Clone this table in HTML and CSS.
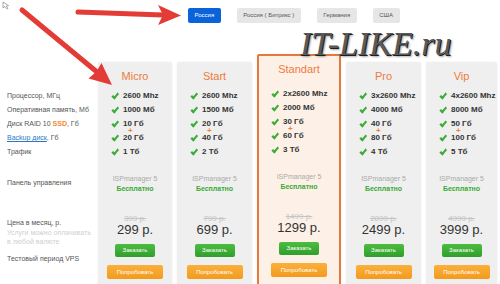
FILE: index.html
```html
<!DOCTYPE html>
<html lang="ru">
<head>
<meta charset="utf-8">
<title>VPS тарифы</title>
<link rel="stylesheet" href="styles.css">
</head>
<body>
<div class="page">
  <div class="tabs">
    <span class="tab active">Россия</span>
    <span class="tab">Россия ( Битрикс )</span>
    <span class="tab">Германия</span>
    <span class="tab">США</span>
  </div>

  <div class="table">
    <div class="labels">
      <div class="lbl">Процессор, МГц</div>
      <div class="lbl">Оперативная память, Мб</div>
      <div class="lbl">Диск RAID 10 <b class="ssd">SSD</b>, Гб</div>
      <div class="lbl"><a class="backup">Backup диск</a>, Гб</div>
      <div class="lbl">Трафик</div>
      <div class="lbl-panel">Панель управления</div>
      <div class="lbl-price">Цена в месяц, р.</div>
      <div class="lbl-note">Услуги можно оплачивать<br>в любой валюте</div>
      <div class="lbl-test">Тестовый период VPS</div>
    </div>

    <div class="card">
      <div class="title">Micro</div>
      <ul class="feats">
        <li class="feat"><i class="chk"></i>2600 Mhz</li>
        <li class="feat"><i class="chk"></i>1000 Мб</li>
        <li class="feat disk"><i class="chk"></i>10 Гб<span class="plus">+</span></li>
        <li class="feat"><i class="chk"></i>20 Гб</li>
        <li class="feat"><i class="chk"></i>1 Тб</li>
      </ul>
      <div class="isp">ISPmanager 5<br><span class="free">Бесплатно</span></div>
      <div class="old">399 р.</div>
      <div class="price">299 р.</div>
      <div class="btn order">Заказать</div>
      <div class="btn try">Попробовать</div>
    </div>

    <div class="card">
      <div class="title">Start</div>
      <ul class="feats">
        <li class="feat"><i class="chk"></i>2600 Mhz</li>
        <li class="feat"><i class="chk"></i>1500 Мб</li>
        <li class="feat disk"><i class="chk"></i>20 Гб<span class="plus">+</span></li>
        <li class="feat"><i class="chk"></i>40 Гб</li>
        <li class="feat"><i class="chk"></i>2 Тб</li>
      </ul>
      <div class="isp">ISPmanager 5<br><span class="free">Бесплатно</span></div>
      <div class="old">799 р.</div>
      <div class="price">699 р.</div>
      <div class="btn order">Заказать</div>
      <div class="btn try">Попробовать</div>
    </div>

    <div class="card featured">
      <div class="title">Standart</div>
      <ul class="feats">
        <li class="feat"><i class="chk"></i>2x2600 Mhz</li>
        <li class="feat"><i class="chk"></i>2000 Мб</li>
        <li class="feat disk"><i class="chk"></i>30 Гб<span class="plus">+</span></li>
        <li class="feat"><i class="chk"></i>60 Гб</li>
        <li class="feat"><i class="chk"></i>3 Тб</li>
      </ul>
      <div class="isp">ISPmanager 5<br><span class="free">Бесплатно</span></div>
      <div class="old">1499 р.</div>
      <div class="price">1299 р.</div>
      <div class="btn order">Заказать</div>
      <div class="btn try">Попробовать</div>
    </div>

    <div class="card">
      <div class="title">Pro</div>
      <ul class="feats">
        <li class="feat"><i class="chk"></i>3x2600 Mhz</li>
        <li class="feat"><i class="chk"></i>4000 Мб</li>
        <li class="feat disk"><i class="chk"></i>40 Гб<span class="plus">+</span></li>
        <li class="feat"><i class="chk"></i>80 Гб</li>
        <li class="feat"><i class="chk"></i>4 Тб</li>
      </ul>
      <div class="isp">ISPmanager 5<br><span class="free">Бесплатно</span></div>
      <div class="old">2899 р.</div>
      <div class="price">2499 р.</div>
      <div class="btn order">Заказать</div>
      <div class="btn try">Попробовать</div>
    </div>

    <div class="card">
      <div class="title">Vip</div>
      <ul class="feats">
        <li class="feat"><i class="chk"></i>4x2600 Mhz</li>
        <li class="feat"><i class="chk"></i>8000 Мб</li>
        <li class="feat disk"><i class="chk"></i>50 Гб<span class="plus">+</span></li>
        <li class="feat"><i class="chk"></i>100 Гб</li>
        <li class="feat"><i class="chk"></i>5 Тб</li>
      </ul>
      <div class="isp">ISPmanager 5<br><span class="free">Бесплатно</span></div>
      <div class="old">4999 р.</div>
      <div class="price">3999 р.</div>
      <div class="btn order">Заказать</div>
      <div class="btn try">Попробовать</div>
    </div>
  </div>

  <div class="logo">IT-LIKE.ru</div>

  <svg class="arrows" width="500" height="284" viewBox="0 0 500 284">
    <path d="M3 2 L3 8 L5 6.5 L7 9 L8 8.4 L6.3 6 L8.6 5.6 Z" fill="#fff" stroke="#888" stroke-width="0.7"/>
    <line x1="78" y1="12" x2="163" y2="15" stroke="#e33b36" stroke-width="5" stroke-linecap="round"/>
    <polygon points="181,15.5 158,5 163,15 158,25" fill="#e33b36"/>
    <line x1="22" y1="10" x2="97" y2="72" stroke="#e33b36" stroke-width="5" stroke-linecap="round"/>
    <polygon points="112,85 88.5,78.5 96.5,71.5 101.5,63" fill="#e33b36"/>
  </svg>
</div>
</body>
</html>
```

FILE: styles.css
```css
* { box-sizing: border-box; }
html, body { margin: 0; padding: 0; background: #fff; }
body { font-family: "Liberation Sans", Arial, sans-serif; color: #444; }

.page {
  position: relative;
  width: 500px;
  height: 284px;
  overflow: hidden;
}

.tabs {
  display: flex;
  gap: 16px;
  margin-top: 8px;
  padding-left: 188px;
  height: 15px;
}
.tab {
  display: block;
  height: 15px;
  line-height: 15px;
  padding: 0 6.5px;
  font-size: 6px;
  color: #555;
  background: #e6e6e6;
  border-radius: 2px;
  white-space: nowrap;
}
.tab.active {
  background: #0b63d9;
  color: #fff;
}

.table {
  display: grid;
  grid-template-columns: 86px 74px 75px 84px 75px 71px;
  column-gap: 5px;
  align-items: start;
  margin-top: 31px;
  padding-left: 7px;
}

/* labels column */
.labels {
  margin-top: 8px;
  padding-top: 27px;
  font-size: 7px;
  color: #555;
  white-space: nowrap;
}
.lbl { height: 14px; line-height: 14px; }
.ssd { color: #f08a30; }
.backup { color: #2b78c2; text-decoration: underline; }
.lbl-panel { margin-top: 19px; line-height: 10px; }
.lbl-price { margin-top: 30px; line-height: 10px; }
.lbl-note { line-height: 9px; color: #d0d0d0; }
.lbl-test { margin-top: 8px; line-height: 10px; }

/* cards */
.card {
  margin-top: 8px;
  min-height: 240px;
  padding-top: 8px;
  background: #efefef;
  border-radius: 2px;
  box-shadow: 0 0 2px rgba(0, 0, 0, 0.08);
}
.card.featured {
  margin-top: 0;
  padding-top: 7px;
  background: #fdf1e7;
  border: 2px solid #e4783d;
  border-radius: 2px;
}

.title {
  height: 12px;
  line-height: 12px;
  font-size: 11px;
  text-align: center;
  color: #ee7b3c;
}

.feats {
  list-style: none;
  margin: 7px 0 0;
  padding: 0 0 0 15px;
}
.featured .feats { margin-top: 12px; padding-left: 14px; }
.feat {
  position: relative;
  display: flex;
  align-items: center;
  gap: 3px;
  height: 14px;
  line-height: 14px;
  font-size: 8px;
  font-weight: bold;
  color: #333;
  white-space: nowrap;
}
.chk {
  display: block;
  width: 6px;
  height: 4px;
  border-left: 2px solid #3dad3a;
  border-bottom: 2px solid #3dad3a;
  transform: rotate(-50deg) translate(0px, -1px) scaleX(1.2);
  margin-right: 1px;
}
.plus {
  position: absolute;
  left: 15px;
  top: 11px;
  line-height: 6px;
  font-size: 8px;
  color: #f07d38;
}

.isp {
  margin-top: 15px;
  text-align: center;
  font-size: 7px;
  line-height: 10px;
  color: #aaa;
}
.free { color: #3aa936; font-weight: bold; }

.old {
  margin-top: 20px;
  text-align: center;
  font-size: 8px;
  line-height: 9px;
  color: #c4c4c4;
  text-decoration: line-through;
}
.price {
  text-align: center;
  font-size: 13px;
  line-height: 13px;
  color: #333;
}

.btn {
  margin: 0 auto;
  text-align: center;
  color: #fff;
  font-size: 6px;
  border-radius: 2px;
  white-space: nowrap;
}
.order {
  margin-top: 8px;
  width: 40px;
  height: 13px;
  line-height: 13px;
  background: linear-gradient(#4dbd40, #2f9e2d);
}
.try {
  margin-top: 8px;
  width: 56px;
  height: 14px;
  line-height: 14px;
  background: linear-gradient(#fbb03a, #f39a1f);
}

.logo {
  position: absolute;
  left: 300px;
  top: 27px;
  font-family: "Liberation Serif", "Times New Roman", serif;
  font-style: italic;
  font-size: 34px;
  line-height: 34px;
  color: #5a5a5a;
  text-shadow: 1px 1px 0 #1e1e1e, 2px 2px 2px rgba(0, 0, 0, 0.35);
  white-space: nowrap;
}

.arrows {
  position: absolute;
  left: 0;
  top: 0;
  pointer-events: none;
}
```
